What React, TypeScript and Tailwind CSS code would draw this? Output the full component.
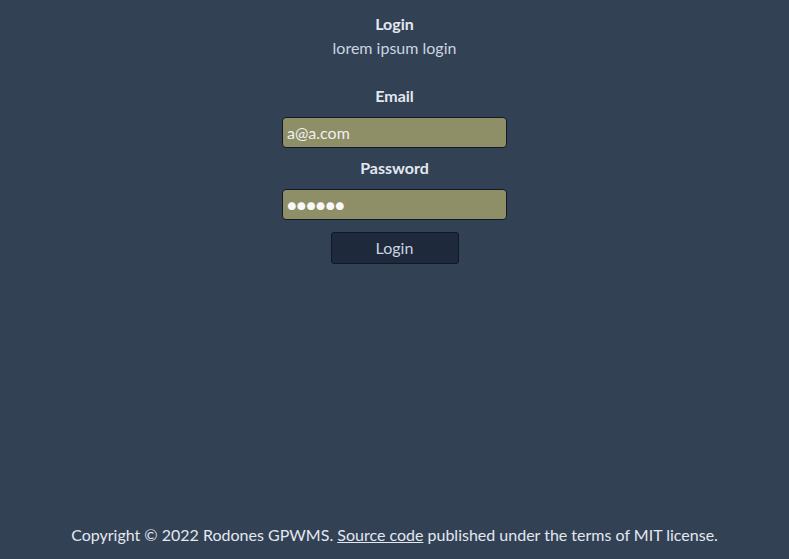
import React from "react";

export default function App() {
  return (
    <div
      className="w-[789px] h-[559px] bg-[#334155] text-[#e2e8f0] flex flex-col items-center text-[16px] leading-[24px]"
      style={{ fontFamily: 'Lato, "Open Sans", sans-serif' }}
    >
      <div className="flex flex-col items-center pt-[12px]">
        <div className="font-bold">Login</div>
        <div className="text-[#cbd5e1]">lorem ipsum login</div>
      </div>
      <form className="flex flex-col items-center mt-[24px]" onSubmit={(e) => e.preventDefault()}>
        <label className="font-bold">Email</label>
        <input
          className="mt-[9px] w-[225px] h-[31px] rounded-[4px] border border-[#111827] bg-[#8e8f66] px-[4px] text-[#eef0f2] outline-none"
          defaultValue="a@a.com"
        />
        <label className="font-bold mt-[8px]">Password</label>
        <input
          className="mt-[9px] w-[225px] h-[31px] rounded-[4px] border border-[#111827] bg-[#8e8f66] px-[4px] text-[#f8f8f8] text-[16px] outline-none"
          defaultValue="●●●●●●"
        />
        <button className="mt-[12px] w-[128px] h-[32px] rounded-[3px] border border-[#0f172a] bg-[#1e293b] text-[#cbd5e1]">
          Login
        </button>
      </form>
      <div className="mt-auto mb-[12px] text-[#e2e8f0]">
        Copyright © 2022 Rodones GPWMS. <a className="underline" href="#">Source code</a> published under the terms of MIT license.
      </div>
    </div>
  );
}
